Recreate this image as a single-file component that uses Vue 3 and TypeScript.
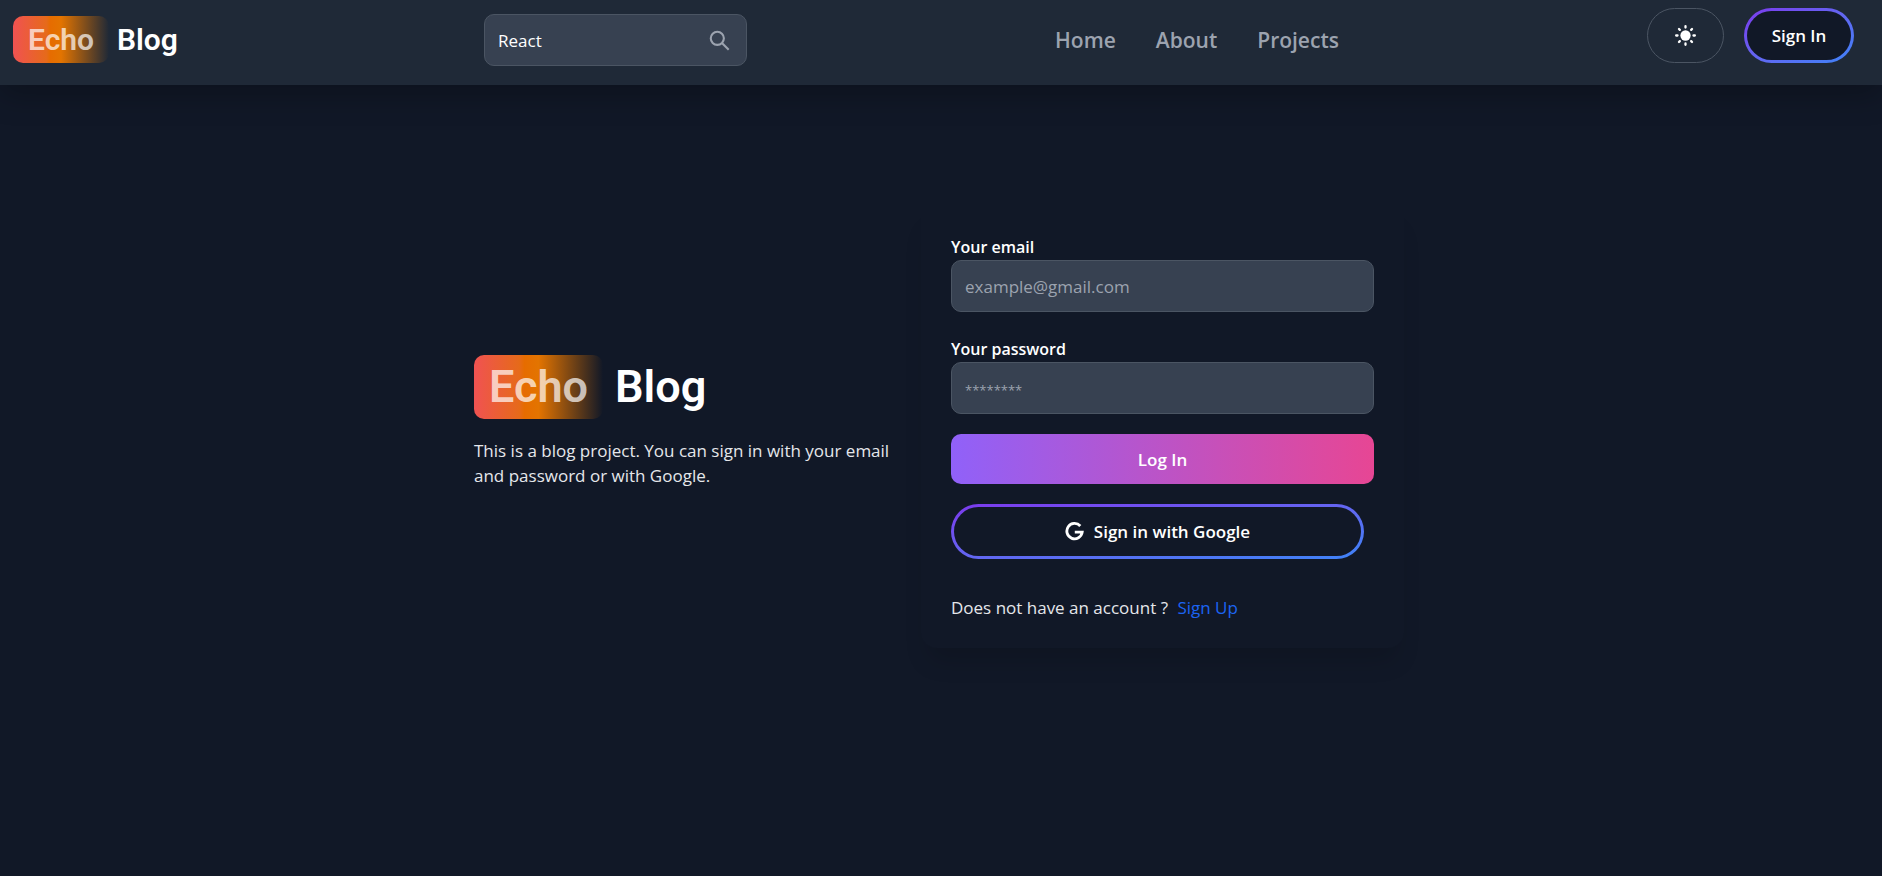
<script setup lang="ts">
import { ref } from 'vue'

const search = ref('React')
const email = ref('')
const password = ref('')
const links: string[] = ['Home', 'About', 'Projects']
</script>

<template>
  <div class="page">
    <header class="navbar">
      <a class="brand" href="#"><span class="badge">Echo</span>Blog</a>
      <form class="search" role="search" @submit.prevent>
        <input v-model="search" type="text" aria-label="Search" placeholder="Search..." />
        <svg viewBox="0 0 24 24" aria-hidden="true" fill="none" stroke="currentColor" stroke-width="2.4">
          <circle cx="9.5" cy="9.5" r="7.5" />
          <path d="M14.8 14.8 22.5 22.5" />
        </svg>
      </form>
      <nav class="links">
        <a v-for="link in links" :key="link" href="#">{{ link }}</a>
      </nav>
      <div class="actions">
        <button class="theme" type="button" aria-label="Toggle theme">
          <svg viewBox="0 0 20 20" aria-hidden="true">
            <circle cx="10" cy="10" r="4.9" fill="currentColor" />
            <path
              d="M10 1.1v1.3M10 17.6v1.3M1.1 10h1.3M17.6 10h1.3M3.8 3.8l.8.8M15.4 15.4l.8.8M3.8 16.2l.8-.8M15.4 4.6l.8-.8"
              fill="none" stroke="currentColor" stroke-width="2.2" stroke-linecap="round"
            />
          </svg>
        </button>
        <button class="outline" type="button">Sign In</button>
      </div>
    </header>

    <main class="content">
      <section class="intro">
        <a class="brand large" href="#"><span class="badge">Echo</span>Blog</a>
        <p>This is a blog project. You can sign in with your email and password or with Google.</p>
      </section>

      <section class="card">
        <form @submit.prevent>
          <div class="field">
            <label for="email">Your email</label>
            <input id="email" v-model="email" type="email" placeholder="example@gmail.com" />
          </div>
          <div class="field">
            <label for="password">Your password</label>
            <input id="password" v-model="password" type="password" placeholder="********" />
          </div>
          <button class="login" type="submit">Log In</button>
          <button class="outline google" type="button">
            <svg viewBox="0 0 20 20" aria-hidden="true">
              <path
                d="M16.1 4.2A8.1 8.1 0 1 0 18.1 10.7H10.3"
                fill="none" stroke="currentColor" stroke-width="3"
              />
            </svg>
            Sign in with Google
          </button>
        </form>
        <p class="signup">Does not have an account ? <a href="#">Sign Up</a></p>
      </section>
    </main>
  </div>
</template>

<style>
body {
  margin: 0;
  background: #111827;
}
</style>

<style scoped>
.page,
.page * {
  box-sizing: border-box;
}

.page {
  min-height: 100vh;
  background: #111827;
  color: #fff;
  font-family: 'Open Sans', 'Noto Sans', sans-serif;
  font-size: 17px;
  line-height: 25px;
}

a {
  color: inherit;
  text-decoration: none;
}

button,
input {
  font: inherit;
  color: inherit;
}

button {
  cursor: pointer;
}

p {
  margin: 0;
}

.navbar {
  display: grid;
  grid-template-columns: 471px 263px 1fr auto;
  align-items: start;
  height: 85px;
  padding: 8px 28px 0 13px;
  background: #1f2937;
  box-shadow: 0 10px 30px rgba(0, 0, 0, 0.25);
}

.brand {
  display: flex;
  align-items: center;
  gap: 8px;
  font-family: Roboto, sans-serif;
  font-size: 30px;
  font-weight: 600;
  line-height: 47px;
}

.navbar .brand {
  margin-top: 8px;
}

.badge {
  padding: 0 15px;
  border-radius: 10px;
  background: linear-gradient(to right, #f05252, #e66a1a 35%, #e66c00 39%, #e37400 50%, rgba(227, 116, 0, 0));
  color: rgba(255, 255, 255, 0.7);
}

.search {
  position: relative;
  margin-top: 6px;
}

input {
  display: block;
  width: 100%;
  height: 52px;
  padding: 0 13px;
  border: 1px solid #4b5563;
  border-radius: 10px;
  background: #374151;
  outline: none;
}

input::placeholder {
  color: #9ca3af;
  opacity: 1;
}

input[type='password']::placeholder {
  font-size: 13px;
}

.search svg {
  position: absolute;
  top: 16px;
  right: 17px;
  width: 21px;
  height: 21px;
  color: #9ca3af;
}

.links {
  display: flex;
  justify-content: center;
  gap: 40px;
  margin-top: 16px;
  color: #9ca3af;
  font-size: 21px;
  font-weight: 600;
  line-height: 32px;
}

.actions {
  display: flex;
  gap: 20px;
}

.theme {
  display: grid;
  place-items: center;
  width: 77px;
  height: 55px;
  border: 1px solid #4b5563;
  border-radius: 28px;
  background: transparent;
}

.theme svg {
  width: 21px;
  height: 21px;
}

.outline {
  display: flex;
  align-items: center;
  justify-content: center;
  gap: 10px;
  width: 110px;
  height: 55px;
  padding: 0;
  border: 2px solid transparent;
  border-radius: 28px;
  background:
    linear-gradient(#111827, #111827) padding-box,
    linear-gradient(to bottom right, #7c3aed, #6366f1 50%, #3f83f8) border-box;
  font-weight: 600;
}

.content {
  display: grid;
  grid-template-columns: 420px 483px;
  gap: 27px;
  justify-content: center;
  align-items: start;
  padding: 120px 4px 40px 0;
}

.intro {
  padding-top: 150px;
}

.intro p {
  margin-top: 19px;
  color: #e5e7eb;
}

.large {
  gap: 12px;
  font-size: 45px;
  line-height: 64px;
}

.card {
  padding: 30px 30px 28px;
  border-radius: 16px;
  box-shadow: 0 20px 24px -8px rgba(0, 0, 0, 0.15);
}

.field {
  margin-bottom: 25px;
}

.field + .field {
  margin-bottom: 20px;
}

.field label {
  display: block;
  font-size: 16px;
  font-weight: 600;
}

.login {
  display: block;
  width: 100%;
  height: 50px;
  margin-bottom: 20px;
  border: 0;
  border-radius: 10px;
  background: linear-gradient(to right, #9061f9, #e74694);
  font-weight: 600;
}

.google {
  width: calc(100% - 10px);
  border-width: 3px;
}

.actions .outline {
  border-width: 3px;
}

.google svg {
  width: 19px;
  height: 19px;
}

.signup {
  margin-top: 36px;
  color: #e5e7eb;
}

.signup a {
  margin-left: 5px;
  color: #1c64f2;
}
</style>
